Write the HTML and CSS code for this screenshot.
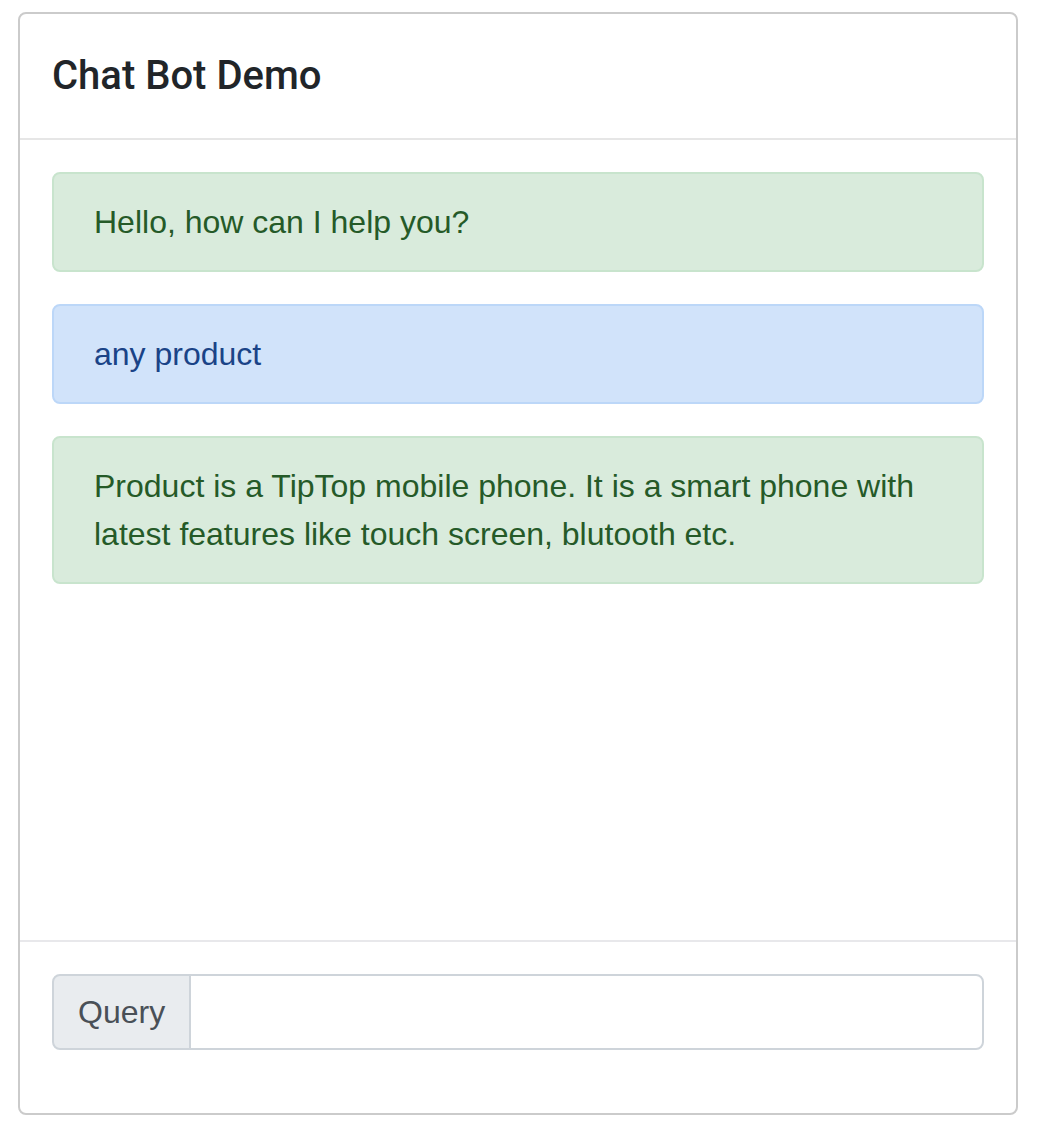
FILE: index.html
```html
<!DOCTYPE html>
<html lang="en">
<head>
<meta charset="utf-8">
<title>Chat Bot Demo</title>
<link rel="stylesheet" href="styles.css">
</head>
<body>
<div class="card">
  <div class="card-header">
    <h5 class="card-title">Chat Bot Demo</h5>
  </div>
  <div class="card-body">
    <div class="alert alert-bot">Hello, how can I help you?</div>
    <div class="alert alert-user">any product</div>
    <div class="alert alert-bot">Product is a TipTop mobile phone. It is a smart phone with latest features like touch screen, blutooth etc.</div>
  </div>
  <div class="card-footer">
    <div class="input-group">
      <span class="input-prepend">Query</span>
      <input class="form-control" type="text">
    </div>
  </div>
</div>
</body>
</html>
```
FILE: styles.css
```css
* { box-sizing: border-box; }
html, body { margin: 0; padding: 0; background: #fff; }
body {
  font-family: "Liberation Sans", Arial, sans-serif;
  font-size: 32px;
  line-height: 1.5;
  color: #212529;
  padding: 12px 0 0 18px;
}
.card {
  width: 1000px;
  border: 2px solid #cbcbcb;
  border-radius: 8px;
  background: #fff;
}
.card-header {
  padding: 38px 32px 38px 32px;
  border-bottom: 2px solid #e6e6e6;
}
.card-title {
  margin: 0;
  font-family: Roboto, "Liberation Sans", Arial, sans-serif;
  font-size: 40px;
  line-height: 48px;
  font-weight: 500;
  color: #212529;
}
.card-body {
  height: 800px;
  padding: 32px;
}
.alert {
  padding: 24px 40px;
  border: 2px solid transparent;
  border-radius: 8px;
  margin-bottom: 32px;
  line-height: 48px;
}
.alert-bot {
  background: #d9ebdc;
  border-color: #c8e4cd;
  color: #255a28;
}
.alert-user {
  background: #d1e3fa;
  border-color: #bcd7f8;
  color: #1a4387;
}
.card-footer {
  border-top: 2px solid #e8e8eb;
  padding: 32px 32px 31px 32px;
}
.input-group {
  display: flex;
  height: 76px;
  margin-bottom: 32px;
}
.input-prepend {
  display: flex;
  align-items: center;
  padding: 0 24px;
  background: #e9ecef;
  border: 2px solid #ced4da;
  border-radius: 8px 0 0 8px;
  color: #495057;
  font-size: 32px;
}
.form-control {
  flex: 1;
  min-width: 0;
  height: 76px;
  margin: 0 0 0 -2px;
  padding: 12px 24px;
  border: 2px solid #ced4da;
  border-radius: 0 8px 8px 0;
  font-family: inherit;
  font-size: 32px;
  color: #495057;
  background: #fff;
  outline: none;
}
```
